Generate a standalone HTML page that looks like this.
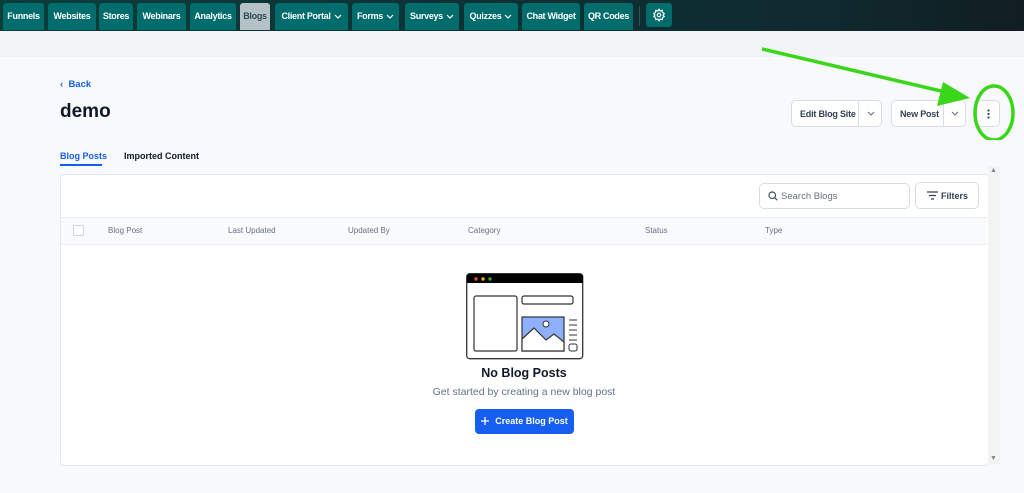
<!DOCTYPE html><html><head><style>
body{margin:0;width:1024px;height:493px;background:#f8f9fb;font-family:"Liberation Sans",sans-serif;position:relative;overflow:hidden}
.top{position:absolute;left:0;top:0;width:1024px;height:31px;background:linear-gradient(90deg,#0b3d3d,#0f2a2f 80%,#111d22)}
.tab{position:absolute;top:3px;height:27px;background:#006c6c;border-radius:3px 3px 0 0;color:#fff;font-size:9px;font-weight:bold;line-height:27px;text-align:center;letter-spacing:-.3px}
.tab svg.c{vertical-align:middle;margin-left:3px}
.strip{position:absolute;top:31px;left:0;width:1024px;height:26px;background:#f1f4f7}
.a{position:absolute}
.btn{position:absolute;background:#fff;border:1px solid #d8dde3;border-radius:5px;font-size:9px;font-weight:bold;color:#344054}
.th{position:absolute;top:226px;font-size:8px;color:#667085}
</style></head><body>
<div class="top"></div>
<div class="tab" style="left:3px;width:41px">Funnels</div>
<div class="tab" style="left:48px;width:48px">Websites</div>
<div class="tab" style="left:99px;width:34px">Stores</div>
<div class="tab" style="left:137px;width:49px">Webinars</div>
<div class="tab" style="left:190px;width:46px">Analytics</div>
<div class="tab" style="left:240px;width:30px;background:#b4c2c8;color:#2c4a55">Blogs</div>
<div class="tab" style="left:275px;width:73px">Client Portal<svg class="c" width="8" height="5" viewBox="0 0 8 5"><path d="M1 1l3 3 3-3" fill="none" stroke="#fff" stroke-width="1.2"/></svg></div>
<div class="tab" style="left:352px;width:47px">Forms<svg class="c" width="8" height="5" viewBox="0 0 8 5"><path d="M1 1l3 3 3-3" fill="none" stroke="#fff" stroke-width="1.2"/></svg></div>
<div class="tab" style="left:405px;width:54px">Surveys<svg class="c" width="8" height="5" viewBox="0 0 8 5"><path d="M1 1l3 3 3-3" fill="none" stroke="#fff" stroke-width="1.2"/></svg></div>
<div class="tab" style="left:464px;width:54px">Quizzes<svg class="c" width="8" height="5" viewBox="0 0 8 5"><path d="M1 1l3 3 3-3" fill="none" stroke="#fff" stroke-width="1.2"/></svg></div>
<div class="tab" style="left:522px;width:58px">Chat Widget</div>
<div class="tab" style="left:584px;width:49px">QR Codes</div>
<div class="a" style="left:639px;top:6px;width:1px;height:20px;background:#2a5555"></div>
<div class="tab" style="left:646px;width:26px;height:24px;border-radius:3px"><svg width="14" height="14" viewBox="0 0 24 24" style="margin-top:5px" fill="none" stroke="#fff" stroke-width="2"><circle cx="12" cy="12" r="3"/><path d="M12 2l2 3 3.5-1 .5 3.5 3 2-2 2.5 2 2.5-3 2-.5 3.5-3.5-1-2 3-2-3-3.5 1-.5-3.5-3-2 2-2.5-2-2.5 3-2 .5-3.5 3.5 1z"/></svg></div>
<div class="strip"></div>
<div class="a" style="left:60px;top:79px;font-size:9.5px;color:#155eef;font-weight:bold">‹&nbsp; Back</div>
<div class="a" style="left:60px;top:101px;font-size:19px;font-weight:bold;color:#101828">demo</div>
<div class="btn" style="left:791px;top:100px;width:89px;height:25px"><span class="a" style="left:8px;top:8px;letter-spacing:-.2px">Edit Blog Site</span><span class="a" style="left:66px;top:0;height:25px;border-left:1px solid #d8dde3;width:23px"><svg class="a" style="left:8px;top:10px" width="8" height="5" viewBox="0 0 8 5"><path d="M1 1l3 3 3-3" fill="none" stroke="#667085" stroke-width="1.1"/></svg></span></div>
<div class="btn" style="left:891px;top:100px;width:73px;height:25px"><span class="a" style="left:8px;top:8px;letter-spacing:-.2px">New Post</span><span class="a" style="left:51px;top:0;height:25px;border-left:1px solid #d8dde3;width:22px"><svg class="a" style="left:7px;top:10px" width="8" height="5" viewBox="0 0 8 5"><path d="M1 1l3 3 3-3" fill="none" stroke="#667085" stroke-width="1.1"/></svg></span></div>
<div class="btn" style="left:976px;top:100px;width:22px;height:25px"><svg class="a" style="left:10px;top:8px" width="3" height="10"><circle cx="1.5" cy="1.5" r="1.1" fill="#344054"/><circle cx="1.5" cy="5" r="1.1" fill="#344054"/><circle cx="1.5" cy="8.5" r="1.1" fill="#344054"/></svg></div>
<svg class="a" style="left:750px;top:40px" width="274" height="100"><line x1="12" y1="9" x2="208" y2="55" stroke="#3ad61a" stroke-width="3.5"/><polygon points="220,58 187,66 193,42" fill="#3ad61a"/><ellipse cx="244" cy="73" rx="19" ry="27" fill="none" stroke="#3ad61a" stroke-width="3.5"/></svg>
<div class="a" style="left:60px;top:151px;font-size:9px;font-weight:bold;color:#155eef">Blog Posts</div>
<div class="a" style="left:60px;top:164px;width:42px;height:2px;background:#155eef"></div>
<div class="a" style="left:124px;top:151px;font-size:9px;font-weight:bold;color:#101828">Imported Content</div>
<div class="a" style="left:60px;top:174px;width:927px;height:290px;background:#fff;border:1px solid #e4e7ec;border-radius:4px"></div>
<div class="a" style="left:988px;top:166px;width:12px;height:298px;background:#f3f3f3"></div>
<div class="a" style="left:990px;top:167px;font-size:7px;color:#888">▲</div>
<div class="a" style="left:990px;top:455px;font-size:7px;color:#888">▼</div>
<div class="btn" style="left:759px;top:183px;width:149px;height:24px;font-weight:normal;color:#667085;font-size:9.5px"><svg class="a" style="left:8px;top:7px" width="10" height="10" viewBox="0 0 10 10"><circle cx="4.2" cy="4.2" r="3.3" fill="none" stroke="#344054" stroke-width="1.1"/><path d="M6.6 6.6l2.6 2.6" stroke="#344054" stroke-width="1.1"/></svg><span class="a" style="left:21px;top:7px">Search Blogs</span></div>
<div class="btn" style="left:915px;top:182px;width:62px;height:25px"><svg class="a" style="left:11px;top:8px" width="11" height="9"><path d="M0 1h11M2 4.5h7M4 8h3" stroke="#344054" stroke-width="1.2"/></svg><span class="a" style="left:25px;top:8px">Filters</span></div>
<div class="a" style="left:61px;top:217px;width:926px;height:26px;background:#f9fafb;border-top:1px solid #eaecf0;border-bottom:1px solid #eaecf0"></div>
<div class="a" style="left:73px;top:225px;width:9px;height:9px;border:1px solid #d0d5dd;border-radius:2px;background:#fff"></div>
<div class="th" style="left:108px">Blog Post</div><div class="th" style="left:228px">Last Updated</div><div class="th" style="left:348px">Updated By</div><div class="th" style="left:468px">Category</div><div class="th" style="left:645px">Status</div><div class="th" style="left:765px">Type</div>
<svg class="a" style="left:466px;top:273px" width="118" height="87" viewBox="0 0 118 87">
<rect x="0.7" y="0.7" width="116" height="85" rx="3" fill="#fff" stroke="#333" stroke-width="1.3"/>
<path d="M1 4a3 3 0 0 1 3-3h110a3 3 0 0 1 3 3v6H1z" fill="#000"/>
<circle cx="10" cy="6" r="1.7" fill="#e0512b"/><circle cx="17" cy="6" r="1.7" fill="#f2b01e"/><circle cx="24" cy="6" r="1.7" fill="#3ca53c"/>
<rect x="8" y="23" width="43" height="55" rx="2" fill="none" stroke="#333" stroke-width="1.2"/>
<rect x="56" y="23" width="51" height="8" rx="2" fill="none" stroke="#333" stroke-width="1.2"/>
<rect x="56" y="44" width="42" height="34" fill="#8fb0ff" stroke="#333" stroke-width="1.2"/>
<path d="M56 66l12-11 12 12 8-6 10 8v9H56z" fill="#fff" stroke="#333" stroke-width="1.2"/>
<circle cx="80" cy="51" r="3" fill="#fff" stroke="#333"/>
<path d="M103 47h8M103 52h8M103 57h8M103 62h8M103 67h8" stroke="#333"/>
<rect x="103" y="71" width="8" height="7" rx="2" fill="none" stroke="#333"/>
</svg>
<div class="a" style="left:0;width:1048px;top:366px;text-align:center;font-size:12.5px;font-weight:bold;color:#101828">No Blog Posts</div>
<div class="a" style="left:0;width:1048px;top:386px;text-align:center;font-size:10.5px;color:#667085">Get started by creating a new blog post</div>
<div class="a" style="left:475px;top:409px;width:99px;height:25px;background:#155eef;border-radius:4px;color:#fff;font-size:9px;font-weight:bold;line-height:25px;text-align:center"><svg width="8" height="8" style="vertical-align:-0.5px;margin-right:6px"><path d="M4 0v8M0 4h8" stroke="#fff" stroke-width="1.3"/></svg>Create Blog Post</div>
</body></html>
